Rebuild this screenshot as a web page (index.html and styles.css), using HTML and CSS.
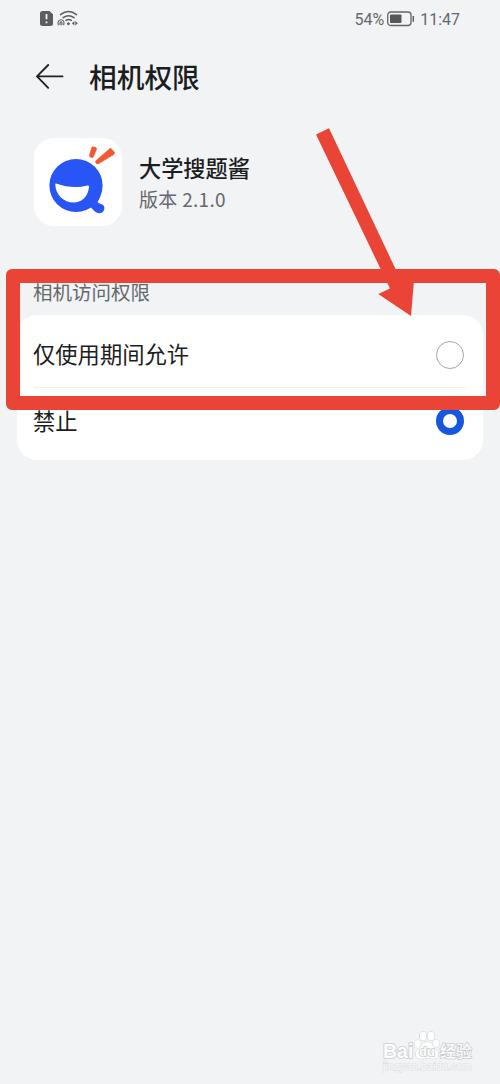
FILE: index.html
```
<!DOCTYPE html>
<html lang="zh-CN">
<head>
<meta charset="utf-8">
<title>相机权限</title>
<link rel="stylesheet" href="styles.css">
</head>
<body>
<main class="screen">
  <div class="status">
    <svg class="status-icons" width="40" height="18" viewBox="0 0 40 18">
      <path d="M2.500 1H9.500L13 4.200V13.500Q13 16 10.500 16H2.500Q0 16 0 13.500V3.500Q0 1 2.500 1Z" fill="#5b5d60"/>
      <path d="M6.500 4V9.300M6.500 11.400V13.200" stroke="#f1f3f5" stroke-width="1.800"/>
      <g fill="none" stroke="#5b5d60" stroke-width="1.500" stroke-linecap="round">
        <path d="M20.500 4.600Q28.500 -1.400 36.500 4.600M23.200 7.700Q28.500 3.600 34 7.700M26 10.400Q28.500 8.600 31.300 10.400"/>
        <path d="M18.300 14.800C16 8 26 8 23.700 14.800M20.100 14.800C19.400 10.800 22.600 10.800 21.900 14.800" stroke-width="1.100"/>
      </g>
      <path d="M28.400 12L30.200 13.800L28.400 15.600L26.600 13.800ZM34.400 11V15.600L31.900 13.300ZM35.300 11V15.600L37.800 13.300Z" fill="#5b5d60"/>
    </svg>
    <div class="status-right">
      <span class="percent">54%</span>
      <svg width="28" height="16" viewBox="0 0 28 16">
        <rect x=".7" y="1" width="23.300" height="13.500" rx="3" fill="none" stroke="#636568" stroke-width="1.300"/>
        <rect x="3" y="3.500" width="11.500" height="8.500" rx="1" fill="#55575a"/>
        <path d="M26.300 5V10.800" stroke="#636568" stroke-width="1.600"/>
      </svg>
      <span class="clock">11:47</span>
    </div>
  </div>
  <header class="header">
    <svg width="30" height="28" viewBox="0 0 30 28" fill="none" stroke="#202225" stroke-width="1.900" stroke-linecap="round" stroke-linejoin="round">
      <path d="M13.200 3L2 14.400L13.200 25.800M2 14.400H27.500"/>
    </svg>
    <h1>相机权限</h1>
  </header>
  <section class="app">
    <svg class="app-icon" width="88" height="88" viewBox="0 0 88 88">
      <circle cx="42" cy="47.500" r="26.600" fill="#2855f5"/>
      <path d="M66.500 58L63.500 64Q64.500 65.500 67 66C70 66.800 71 69.500 70 72C68.800 75.200 65.500 76 62.500 74.500C60 73.200 59 71.500 57 69.500L54 66Z" fill="#2855f5"/>
      <path d="M22 45.500Q38.500 51.300 53.500 47.500Q55.200 47 55 49C54 59 47.500 64.500 39.500 64.500C30 64.500 21.500 57 21.300 46.500Q21.300 45 22 45.500Z" fill="#fff"/>
      <path d="M59 8.700L61.500 9.300Q63 10 62.500 11.500L59.500 18.800Q58.300 20.300 56.500 19.200Q55 18.500 55.500 16.800L57.500 10Q58 8.500 59 8.700ZM76.500 10L80.500 14.300Q81 15.500 79.900 16.400L65 25.600Q62.800 26.500 61.700 24.700Q61 23 62.600 22Z" fill="#f05a32" stroke="#f05a32" stroke-width=".5"/>
    </svg>
    <div class="app-text">
      <div class="app-name">大学搜题酱</div>
      <div class="version">版本 2.1.0</div>
    </div>
  </section>
  <h2 class="section-title">相机访问权限</h2>
  <section class="options">
    <div class="option"><span class="label">仅使用期间允许</span><span class="radio"></span></div>
    <div class="divider"></div>
    <div class="option option-last"><span class="label">禁止</span><span class="radio checked"></span></div>
  </section>
  <div class="highlight"></div>
  <svg class="arrow" width="100" height="190" viewBox="315 127 100 190">
    <path d="M316 134.500L329 128.200L396 270L414 280L411 316L378.300 294L390 288.500Z" fill="#e94435"/>
  </svg>
  <div class="watermark">
    <div class="brand">
      <span class="latin">Bai</span>
      <span class="paw">
        <svg width="26" height="30" viewBox="0 0 26 30" fill="#fcfdfd" stroke="#cfd1d3" stroke-width="1">
          <ellipse cx="3.800" cy="14" rx="3.100" ry="4"/>
          <ellipse cx="9" cy="6" rx="3.400" ry="4.600"/>
          <ellipse cx="17" cy="6" rx="3.400" ry="4.600"/>
          <ellipse cx="22.200" cy="13.500" rx="3.100" ry="4"/>
          <path d="M13 12C8 12 7.500 17 4.500 19C.5 22 .5 28.500 6 28.800C9 29 10 28.200 13 28.200C16 28.200 18 29 21 28.500C26 27.500 25 21.500 22 19C19 16.500 18 12 13 12Z"/>
        </svg>
        <span class="du">du</span>
      </span>
      <span class="cjk">经验</span>
    </div>
    <div class="site">jingyan.baidu.com</div>
  </div>
</main>
</body>
</html>
```
FILE: styles.css
```
* { box-sizing: border-box; }
body {
  margin: 0;
  background: #f1f3f5;
  color: #1b1d20;
  font-family: "Noto Sans CJK SC", sans-serif;
}
.screen {
  position: relative;
  width: 500px;
  height: 1084px;
  overflow: hidden;
  background: #f1f3f5;
}
.status {
  display: flex;
  justify-content: space-between;
  height: 40px;
  padding: 10px 40px 0;
}
.status-right {
  display: flex;
  align-items: flex-start;
  font-size: 16px;
  line-height: 20px;
  color: #66686b;
}
.status-right svg { margin: 1px 5px 0 3px; }
.percent, .clock { font-family: Roboto, sans-serif; }
.header {
  display: flex;
  align-items: center;
  gap: 24px;
  height: 72px;
  padding-left: 35px;
}
.header h1 {
  margin: 0;
  font-size: 27.700px;
  font-weight: 500;
  line-height: 40px;
}
.app {
  display: flex;
  gap: 17px;
  padding: 26px 34px 0;
}
.app-icon {
  border-radius: 20px;
  background: #fff;
}
.app-text { padding-top: 14px; }
.app-name {
  font-size: 22.200px;
  font-weight: 500;
  line-height: 30px;
}
.version {
  margin-top: 3px;
  font-size: 19px;
  line-height: 28px;
  letter-spacing: .3px;
  color: #66686b;
}
.section-title {
  margin: 53px 0 0 33px;
  font-size: 19.500px;
  font-weight: 400;
  line-height: 26px;
  color: #66686b;
}
.options {
  height: 145px;
  margin: 10px 17px 0;
  border-radius: 20px;
  background: #fff;
}
.option {
  display: flex;
  align-items: center;
  justify-content: space-between;
  height: 72px;
  padding: 7px 19px 0 16px;
  font-size: 22.300px;
  line-height: 32px;
}
.option-last { padding: 0 19px 6px 16px; }
.label { padding-bottom: 3px; }
.divider {
  height: 1px;
  margin: 0 17px;
  background: #eaf3f4;
}
.radio {
  width: 28px;
  height: 28px;
  border: 1px solid #a5a7a9;
  border-radius: 50%;
}
.checked { border: 7px solid #1557e0; }
.highlight {
  position: absolute;
  left: 6px;
  top: 269px;
  width: 494px;
  height: 141px;
  border: 14px solid #e94435;
  border-radius: 6px;
}
.arrow {
  position: absolute;
  left: 315px;
  top: 127px;
}
.watermark {
  position: absolute;
  left: 383px;
  top: 1029px;
  width: 94px;
  color: #fcfdfd;
  paint-order: stroke fill;
  -webkit-text-stroke: 1.600px #cbcdcf;
}
.brand {
  display: flex;
  align-items: flex-end;
  height: 31px;
}
.latin {
  width: 31px;
  font: 700 19.500px/18px "Liberation Sans", sans-serif;
}
.paw {
  display: grid;
  width: 26px;
  height: 30px;
}
.paw > * { grid-area: 1 / 1; }
.du {
  align-self: end;
  justify-self: center;
  font: 700 13px/17px "Liberation Sans", sans-serif;
}
.cjk {
  font-size: 16px;
  font-weight: 500;
  line-height: 20px;
}
.site {
  font: 11px/13px "Liberation Sans", sans-serif;
  color: #f8f9fa;
  -webkit-text-stroke: 1px #dcdee0;
}
```
